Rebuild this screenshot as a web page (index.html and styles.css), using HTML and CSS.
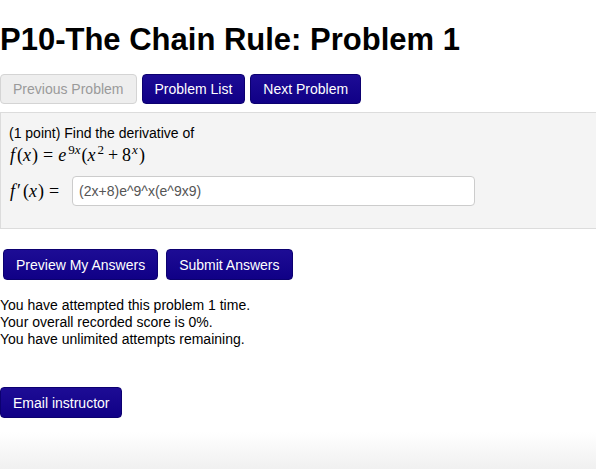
FILE: index.html
```html
<!DOCTYPE html>
<html>
<head>
<meta charset="utf-8">
<link rel="stylesheet" href="styles.css">
</head>
<body>
<div class="page">
  <h1 class="title">P10-The Chain Rule: Problem 1</h1>
  <div class="nav">
    <span class="btn btn-disabled">Previous Problem</span>
    <span class="btn btn-primary">Problem List</span>
    <span class="btn btn-primary">Next Problem</span>
  </div>
  <div class="problem">
    <div class="prompt">(1 point) Find the derivative of</div>
    <div class="math math-line"><i class="fn">f</i>(<i>x</i>)<span class="rel">=</span><i>e</i><sup>9<i>x</i></sup>(<i>x</i><sup>2</sup><span class="op">+</span>8<sup><i>x</i></sup>)</div>
    <div class="answer-row">
      <span class="math"><i class="fn">f</i><span class="prime">′</span>(<i>x</i>)<span class="rel">=</span></span>
      <span class="answer-input">(2x+8)e^9^x(e^9x9)</span>
    </div>
  </div>
  <div class="actions">
    <span class="btn btn-primary btn-tall">Preview My Answers</span>
    <span class="btn btn-primary btn-tall">Submit Answers</span>
  </div>
  <div class="status">
    <div>You have attempted this problem 1 time.</div>
    <div>Your overall recorded score is 0%.</div>
    <div>You have unlimited attempts remaining.</div>
  </div>
  <div class="email">
    <span class="btn btn-primary btn-tall">Email instructor</span>
  </div>
</div>
</body>
</html>
```
FILE: styles.css
```css
html, body {
  margin: 0;
  padding: 0;
  height: 100%;
}
body {
  font-family: "Liberation Sans", Arial, sans-serif;
  font-size: 14px;
  color: #000;
  background: linear-gradient(to bottom, #ffffff 0, #ffffff 432px, #f0f0f0 469px);
  overflow: hidden;
}
.page {
  padding-top: 1px;
}
.title {
  font-size: 31px;
  font-weight: bold;
  line-height: 36px;
  margin: 21px 0 0 0;
}
.nav {
  display: flex;
  gap: 5px;
  margin-top: 16px;
}
.btn {
  display: inline-block;
  box-sizing: border-box;
  height: 30px;
  line-height: 20px;
  padding: 4px 12px;
  border: 1px solid transparent;
  border-radius: 4px;
  font-size: 14px;
  white-space: nowrap;
}
.btn-tall {
  height: 31px;
  padding-top: 5px;
}
.btn-disabled {
  background: #eeeeee;
  border-color: #d4d4d4;
  color: #9a9a9a;
}
.btn-primary {
  background: linear-gradient(to bottom, #1d0c95, #100086);
  border-color: #0c0070;
  color: #fff;
}
.problem {
  margin-top: 8px;
  background: #f4f4f4;
  border-top: 1px solid #dcdcdc;
  border-bottom: 1px solid #dcdcdc;
  border-left: 1px solid #dcdcdc;
  padding: 12px 8px 0 8px;
  height: 117px;
  box-sizing: border-box;
}
.prompt {
  line-height: 17px;
}
.math {
  font-family: "Liberation Serif", "Times New Roman", serif;
  font-size: 18px;
  white-space: nowrap;
}
.math i {
  padding-right: 1px;
}
.math .fn {
  padding-left: 1px;
  padding-right: 2px;
}
.math .prime {
  padding-right: 2px;
}
.math .rel {
  margin: 0 5px;
}
.math .op {
  margin: 0 4px;
}
.math sup {
  font-size: 13px;
  line-height: 0;
  vertical-align: 7px;
  padding-left: 1px;
}
.math-line {
  line-height: 20px;
  margin-top: 3px;
}
.answer-row {
  display: flex;
  align-items: center;
  gap: 8px;
  margin-top: 11px;
}
.answer-input {
  box-sizing: border-box;
  width: 403px;
  height: 30px;
  line-height: 28px;
  padding: 0 6px;
  background: #fff;
  border: 1px solid #cccccc;
  border-radius: 4px;
  color: #555;
  font-size: 14px;
}
.actions {
  display: flex;
  gap: 8px;
  margin-top: 20px;
  padding-left: 3px;
}
.status {
  margin-top: 17px;
  line-height: 17px;
}
.email {
  margin-top: 39px;
}
```
